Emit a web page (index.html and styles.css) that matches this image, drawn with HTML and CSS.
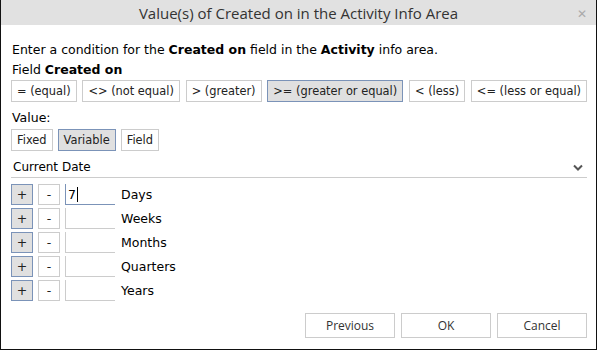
FILE: index.html
```html
<!DOCTYPE html>
<html lang="en">
<head>
	<meta charset="UTF-8">
	<title>Value(s) of Created on</title>
	<link rel="stylesheet" href="styles.css">
</head>
<body>
	<div class="dialog">
		<!-- Title bar -->
		<div class="titlebar">
			<span class="title">Value(s) of Created on in the Activity Info Area</span>
			<span class="close">&#x2715;</span>
		</div>

		<div class="content">
			<p class="intro">Enter a condition for the <b>Created on</b> field in the <b>Activity</b> info area.</p>
			<p class="field-label">Field <b>Created on</b></p>

			<div class="btn-row ops">
				<button class="opt">= (equal)</button>
				<button class="opt">&lt;&gt; (not equal)</button>
				<button class="opt">&gt; (greater)</button>
				<button class="opt active">&gt;= (greater or equal)</button>
				<button class="opt">&lt; (less)</button>
				<button class="opt">&lt;= (less or equal)</button>
			</div>

			<p class="value-label">Value:</p>
			<div class="btn-row kinds">
				<button class="opt">Fixed</button>
				<button class="opt active">Variable</button>
				<button class="opt">Field</button>
			</div>

			<div class="select">
				<span>Current Date</span>
				<svg class="chevron" width="10" height="7" viewBox="0 0 10 7"><path d="M1 1.5 L5 5.5 L9 1.5" fill="none" stroke="#555" stroke-width="2"/></svg>
			</div>

			<div class="offsets">
				<div class="offset-row">
					<button class="step plus">+</button>
					<button class="step">-</button>
					<div class="num focused">7<span class="caret"></span></div>
					<span class="unit">Days</span>
				</div>
				<div class="offset-row">
					<button class="step plus">+</button>
					<button class="step">-</button>
					<div class="num"></div>
					<span class="unit">Weeks</span>
				</div>
				<div class="offset-row">
					<button class="step plus">+</button>
					<button class="step">-</button>
					<div class="num"></div>
					<span class="unit">Months</span>
				</div>
				<div class="offset-row">
					<button class="step plus">+</button>
					<button class="step">-</button>
					<div class="num"></div>
					<span class="unit">Quarters</span>
				</div>
				<div class="offset-row">
					<button class="step plus">+</button>
					<button class="step">-</button>
					<div class="num"></div>
					<span class="unit">Years</span>
				</div>
			</div>
		</div>

		<div class="footer">
			<button class="action">Previous</button>
			<button class="action">OK</button>
			<button class="action">Cancel</button>
		</div>
	</div>
</body>
</html>
```

FILE: styles.css
```css
body {
	margin: 0;
	padding: 0;
	background-color: #fff;
	font-family: "DejaVu Sans", Verdana, sans-serif;
	font-size: 12.5px;
	color: #000;
}

.dialog {
	width: 597px;
	height: 350px;
	box-sizing: border-box;
	border: 1px solid #111;
	border-top: none;
	display: flex;
	flex-direction: column;
}

.titlebar {
	height: 25px;
	background-color: #e1e1e1;
	display: flex;
	align-items: center;
	justify-content: center;
	position: relative;
	font-family: "Open Sans", "Noto Sans", sans-serif;
	font-size: 15px;
	color: #333;
}

.close {
	position: absolute;
	right: 9px;
	top: 5px;
	color: #aaa;
	font-size: 12px;
}

.content {
	flex: 1;
	padding: 0 9px 0 10px;
}

p {
	margin: 0;
}

.intro {
	margin-top: 17px;
	margin-left: 1px;
	line-height: 15px;
}

.field-label {
	margin-top: 5px;
	margin-left: 1px;
	line-height: 15px;
}

.btn-row {
	display: flex;
	gap: 5px;
	margin-top: 3px;
}

.btn-row.ops {
	justify-content: space-between;
}

.btn-row.kinds {
	margin-top: 4px;
}

button {
	font-family: inherit;
	font-size: 11.4px;
	color: #222;
	background-color: #fff;
	border: 1px solid #ccc;
	margin: 0;
	cursor: pointer;
	white-space: nowrap;
	flex-shrink: 0;
}

.opt {
	height: 22px;
	padding: 0 5px;
}

.opt.active {
	background-color: #e0e0e0;
	border-color: #7b93b8;
}

.value-label {
	margin-top: 8px;
	margin-left: 1px;
	line-height: 15px;
}

.select {
	margin-top: 6px;
	height: 20px;
	border-bottom: 1px solid #ccc;
	display: flex;
	align-items: center;
	justify-content: space-between;
	padding: 0 4px 0 2px;
	font-size: 12px;
}

.offsets {
	margin-top: 6px;
	display: flex;
	flex-direction: column;
	gap: 3px;
}

.offset-row {
	display: flex;
	align-items: center;
	height: 21px;
}

.step {
	width: 22px;
	height: 21px;
	padding: 0;
	margin-right: 5px;
	font-size: 12.5px;
}

.step.plus {
	background-color: #e0e0e0;
	border-color: #7b93b8;
}

.num {
	width: 47px;
	height: 20px;
	border-left: 1px solid #ccc;
	border-bottom: 1px solid #ccc;
	display: flex;
	align-items: center;
	padding-left: 2px;
}

.num.focused {
	border-color: #7b93b8;
}

.caret {
	display: inline-block;
	width: 1px;
	height: 15px;
	background-color: #000;
	margin-left: 1px;
}

.unit {
	margin-left: 6px;
}

.footer {
	display: flex;
	justify-content: flex-end;
	gap: 6px;
	padding: 0 9px 11px 0;
}

.action {
	width: 90px;
	height: 25px;
	font-family: "Open Sans", "Noto Sans", sans-serif;
	font-size: 12px;
	color: #333;
}
```
